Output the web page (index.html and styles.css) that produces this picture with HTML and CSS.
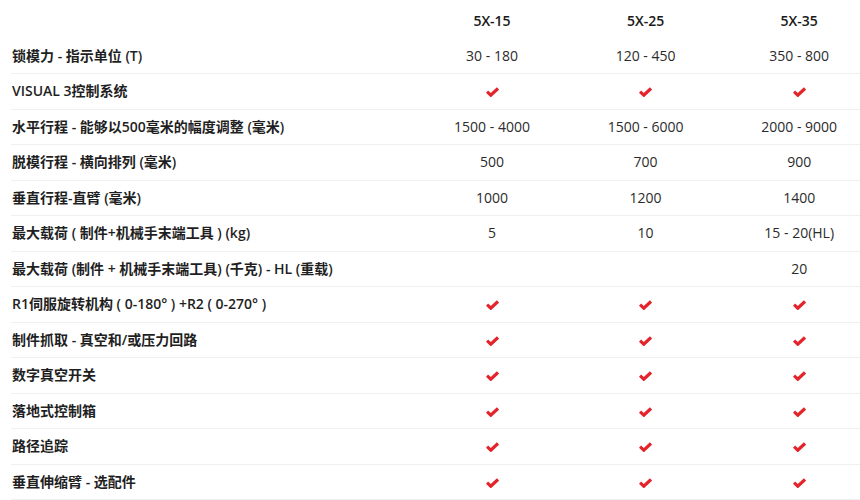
FILE: index.html
```html
<!DOCTYPE html>
<html lang="zh">
<head>
<meta charset="utf-8">
<link rel="stylesheet" href="styles.css">
</head>
<body>
<table class="spec">
  <colgroup>
    <col class="c-label"><col class="c-val"><col class="c-val"><col class="c-val">
  </colgroup>
  <thead>
    <tr><th></th><th>5X-15</th><th>5X-25</th><th>5X-35</th></tr>
  </thead>
  <tbody>
    <tr><td class="label">锁模力 - 指示单位 (T)</td><td>30 - 180</td><td>120 - 450</td><td>350 - 800</td></tr>
    <tr><td class="label">VISUAL 3控制系统</td>
      <td><svg class="check" viewBox="0 0 13 10"><polyline points="1,4.6 4.8,8.2 12,1.4"/></svg></td>
      <td><svg class="check" viewBox="0 0 13 10"><polyline points="1,4.6 4.8,8.2 12,1.4"/></svg></td>
      <td><svg class="check" viewBox="0 0 13 10"><polyline points="1,4.6 4.8,8.2 12,1.4"/></svg></td></tr>
    <tr><td class="label">水平行程 - 能够以500毫米的幅度调整 (毫米)</td><td>1500 - 4000</td><td>1500 - 6000</td><td>2000 - 9000</td></tr>
    <tr><td class="label">脱模行程 - 横向排列 (毫米)</td><td>500</td><td>700</td><td>900</td></tr>
    <tr><td class="label">垂直行程-直臂 (毫米)</td><td>1000</td><td>1200</td><td>1400</td></tr>
    <tr><td class="label">最大载荷 ( 制件+机械手末端工具 ) (kg)</td><td>5</td><td>10</td><td>15 - 20(HL)</td></tr>
    <tr><td class="label">最大载荷 (制件 + 机械手末端工具) (千克) - HL (重载)</td><td></td><td></td><td>20</td></tr>
    <tr><td class="label">R1伺服旋转机构 ( 0-180° ) +R2 ( 0-270° )</td>
      <td><svg class="check" viewBox="0 0 13 10"><polyline points="1,4.6 4.8,8.2 12,1.4"/></svg></td>
      <td><svg class="check" viewBox="0 0 13 10"><polyline points="1,4.6 4.8,8.2 12,1.4"/></svg></td>
      <td><svg class="check" viewBox="0 0 13 10"><polyline points="1,4.6 4.8,8.2 12,1.4"/></svg></td></tr>
    <tr><td class="label">制件抓取 - 真空和/或压力回路</td>
      <td><svg class="check" viewBox="0 0 13 10"><polyline points="1,4.6 4.8,8.2 12,1.4"/></svg></td>
      <td><svg class="check" viewBox="0 0 13 10"><polyline points="1,4.6 4.8,8.2 12,1.4"/></svg></td>
      <td><svg class="check" viewBox="0 0 13 10"><polyline points="1,4.6 4.8,8.2 12,1.4"/></svg></td></tr>
    <tr><td class="label">数字真空开关</td>
      <td><svg class="check" viewBox="0 0 13 10"><polyline points="1,4.6 4.8,8.2 12,1.4"/></svg></td>
      <td><svg class="check" viewBox="0 0 13 10"><polyline points="1,4.6 4.8,8.2 12,1.4"/></svg></td>
      <td><svg class="check" viewBox="0 0 13 10"><polyline points="1,4.6 4.8,8.2 12,1.4"/></svg></td></tr>
    <tr><td class="label">落地式控制箱</td>
      <td><svg class="check" viewBox="0 0 13 10"><polyline points="1,4.6 4.8,8.2 12,1.4"/></svg></td>
      <td><svg class="check" viewBox="0 0 13 10"><polyline points="1,4.6 4.8,8.2 12,1.4"/></svg></td>
      <td><svg class="check" viewBox="0 0 13 10"><polyline points="1,4.6 4.8,8.2 12,1.4"/></svg></td></tr>
    <tr><td class="label">路径追踪</td>
      <td><svg class="check" viewBox="0 0 13 10"><polyline points="1,4.6 4.8,8.2 12,1.4"/></svg></td>
      <td><svg class="check" viewBox="0 0 13 10"><polyline points="1,4.6 4.8,8.2 12,1.4"/></svg></td>
      <td><svg class="check" viewBox="0 0 13 10"><polyline points="1,4.6 4.8,8.2 12,1.4"/></svg></td></tr>
    <tr><td class="label">垂直伸缩臂 - 选配件</td>
      <td><svg class="check" viewBox="0 0 13 10"><polyline points="1,4.6 4.8,8.2 12,1.4"/></svg></td>
      <td><svg class="check" viewBox="0 0 13 10"><polyline points="1,4.6 4.8,8.2 12,1.4"/></svg></td>
      <td><svg class="check" viewBox="0 0 13 10"><polyline points="1,4.6 4.8,8.2 12,1.4"/></svg></td></tr>
  </tbody>
</table>
</body>
</html>
```

FILE: styles.css
```css
html, body {
  margin: 0;
  padding: 0;
  background: #fff;
  overflow: hidden;
}

body {
  font-family: "Open Sans", "Noto Sans CJK SC", sans-serif;
  font-size: 14px;
  color: #2b2b2b;
}

.spec {
  margin-left: 11px;
  border-collapse: collapse;
  table-layout: fixed;
  width: 865px;
}

.c-label { width: 404px; }
.c-val { width: 153.5px; }

.spec th {
  font-weight: 600;
  color: #1a1a1a;
  text-align: center;
  line-height: 20.5px;
  padding: 10.75px 0 7.25px;
}

.spec td {
  text-align: center;
  line-height: 20.5px;
  padding: 7px 0;
  border-bottom: 1px solid #f0f0f0;
  white-space: nowrap;
}

.spec td.label {
  text-align: left;
  font-weight: 600;
  color: #1f1f1f;
  padding-left: 1px;
}

.check {
  width: 13px;
  height: 10px;
  vertical-align: -1px;
}

.check polyline {
  fill: none;
  stroke: #e4232b;
  stroke-width: 3.2;
  stroke-linecap: butt;
  stroke-linejoin: miter;
}
```
